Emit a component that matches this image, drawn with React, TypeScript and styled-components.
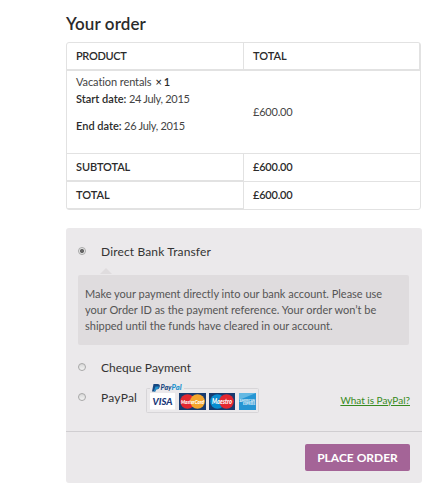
import React from "react";
import styled, { createGlobalStyle } from "styled-components";

const GlobalStyle = createGlobalStyle`
  * { box-sizing: border-box; }
  body { margin: 0; background: #fff; color: #444; font: 11px/16px Lato, sans-serif; }
  p { margin: 0; }
`;

const Page = styled.main`
  width: 438px;
  height: 489px;
  padding: 13px 16px 0 66px;
  overflow: hidden;
`;

const Title = styled.h3`
  margin: 0 0 7px;
  height: 22px;
  font-size: 17px;
  line-height: 22px;
  font-weight: 600;
  letter-spacing: 0.1px;
  color: #2b2b2b;
`;

const OrderTable = styled.section`
  width: 355px;
  border: 1px solid #e2e2e2;
  border-radius: 3px;
`;

const Row = styled.div<{ $height: number }>`
  display: grid;
  grid-template-columns: 177px 1fr;
  height: ${(p) => p.$height}px;
`;

const Cell = styled.div<{ $bottom?: number; $right?: number; $heading?: boolean; $tracking?: number }>`
  display: flex;
  flex-direction: column;
  justify-content: center;
  padding-left: 9px;
  border: 0 solid #e2e2e2;
  border-bottom-width: ${(p) => p.$bottom ?? 0}px;
  border-right-width: ${(p) => p.$right ?? 0}px;
  font-weight: ${(p) => (p.$heading ? 600 : 400)};
  letter-spacing: ${(p) => p.$tracking ?? 0}px;
  color: ${(p) => (p.$heading ? "#2b2b2b" : "#444")};
`;

const Price = styled.span<{ $lift?: number }>`
  letter-spacing: -0.2px;
  padding-bottom: ${(p) => p.$lift ?? 0}px;
`;

const Strong = styled.strong`
  font-weight: 600;
  letter-spacing: 0;
  color: #2b2b2b;
`;

const Quantity = styled(Strong)`
  margin-left: 4px;
  letter-spacing: -0.4px;
`;

const DateLine = styled.p<{ $gap?: number }>`
  line-height: 17px;
  margin-top: ${(p) => p.$gap ?? 0}px;
  letter-spacing: -0.3px;
`;

const ProductName = styled.p`
  line-height: 17px;
  letter-spacing: -0.09px;
`;

const ProductCell = styled(Cell)`
  justify-content: flex-start;
  padding-top: 2px;
`;

const Payment = styled.section`
  width: 356px;
  height: 255px;
  margin-top: 18px;
  border-radius: 3px;
  background: #ebe9eb;
`;

const Methods = styled.div`
  height: 204px;
  padding: 15px 12px 0;
  border-bottom: 1px solid #d0ced1;
`;

const Method = styled.label<{ $height: number; $tracking?: number }>`
  display: flex;
  align-items: center;
  height: ${(p) => p.$height}px;
  font-size: 12px;
  letter-spacing: ${(p) => p.$tracking ?? 0}px;
  color: #333;
`;

const Radio = styled.span<{ $checked?: boolean }>`
  width: 8px;
  height: 8px;
  flex: none;
  margin: 0 15px 2px 0;
  border: 1px solid #a8a8a8;
  border-radius: 50%;
  background: ${(p) =>
    p.$checked ? "radial-gradient(circle, #666 0 1.7px, #e8e8e8 2.4px)" : "linear-gradient(#d8d8d8, #f4f4f4)"};
`;

const Arrow = styled.div`
  width: 0;
  height: 6px;
  margin: 7px 0 0 22px;
  border: 6px solid transparent;
  border-top: 0;
  border-bottom-color: #dfdcde;
`;

const Description = styled.div`
  width: 331px;
  height: 70px;
  margin-top: 1px;
  padding: 11px 7px;
  border-radius: 2px;
  background: #dfdcde;
  color: #555;
  letter-spacing: -0.01px;
  white-space: nowrap;
`;

const Logos = styled.svg`
  display: block;
  margin-left: 8px;
  flex: none;
`;

const HelpLink = styled.a`
  margin-left: auto;
  padding-top: 3px;
  font-size: 10px;
  line-height: 12px;
  letter-spacing: 0;
  color: #368a20;
  text-decoration: underline;
`;

const Footer = styled.div`
  display: flex;
  justify-content: flex-end;
  padding: 12px 12px 0 0;
`;

const Button = styled.button`
  width: 105px;
  height: 27px;
  padding: 0;
  border: 0;
  border-radius: 2px;
  background: #a46497;
  color: #fff;
  font: 700 12px/27px Lato, sans-serif;
`;

const LogoText = styled.text<{ $size: number; $upright?: boolean }>`
  font-family: Lato, sans-serif;
  font-size: ${(p) => p.$size}px;
  font-weight: 900;
  font-style: ${(p) => (p.$upright ? "normal" : "italic")};
  letter-spacing: 0;
`;

const PayPalCards = () => (
  <Logos width="114" height="31" viewBox="0 0 114 31">
    <rect x="1.5" y="5.500" width="112" height="24" rx="1" fill="none" stroke="#d7d5d8" />
    <g transform="translate(1 0)">
      <path d="M4 4h34v4H4z" fill="#ebe9eb" />
      <path d="M7.500 1h4q3 .2 2.200 3T10 6.300L9.300 8.500H6z" fill="#164780" />
      <path d="M9.500 3.500h3.500q-.5 3-3.300 3L9.200 8.500H7.700z" fill="#2191ce" />
      <LogoText $size={7} x="14.500" y="7" fill="#164780" textLength="11" lengthAdjust="spacingAndGlyphs">Pay</LogoText>
      <LogoText $size={7} x="25.500" y="7" fill="#2191ce" textLength="10" lengthAdjust="spacingAndGlyphs">Pal</LogoText>
      <path d="M4 10h25v16.500H4z" fill="#fff" />
      <LogoText $size={9} x="6.500" y="21.500" fill="#193979" textLength="20" lengthAdjust="spacingAndGlyphs">VISA</LogoText>
      <path d="M33 10h27v17H33zM63 10h26v17H63z" fill="#173b70" />
      <circle cx="41.500" cy="18.500" r="7.300" fill="#e32730" />
      <circle cx="51.500" cy="18.500" r="7.300" fill="#f3a52c" />
      <LogoText $size={6} x="35" y="20.500" fill="#fff" textLength="23" lengthAdjust="spacingAndGlyphs">MasterCard</LogoText>
      <circle cx="71.500" cy="18.500" r="7.300" fill="#088bd0" />
      <circle cx="80.500" cy="18.500" r="7.300" fill="#e32730" />
      <LogoText $size={6.5} x="66" y="20.500" fill="#fff" textLength="20" lengthAdjust="spacingAndGlyphs">Maestro</LogoText>
      <path d="M93 10h17v17H93z" fill="#2695d3" />
      <path d="M93 10h17L93 17z" fill="#64b9e3" />
      <LogoText $size={4} $upright x="93.500" y="18.500" fill="#e1f3fb" textLength="15.500" lengthAdjust="spacingAndGlyphs">AMERICAN</LogoText>
      <LogoText $size={4} $upright x="97" y="22" fill="#e1f3fb" textLength="12" lengthAdjust="spacingAndGlyphs">EXPRESS</LogoText>
    </g>
  </Logos>
);

export default function App() {
  return (
    <>
      <GlobalStyle />
      <Page>
        <Title>Your order</Title>
        <OrderTable>
          <Row $height={28}>
            <Cell $heading $bottom={2} $right={1} $tracking={-0.35}>PRODUCT</Cell>
            <Cell $heading $bottom={2} $right={1}>TOTAL</Cell>
          </Row>
          <Row $height={83}>
            <ProductCell $bottom={1}>
              <ProductName>Vacation rentals<Quantity>× 1</Quantity></ProductName>
              <DateLine><Strong>Start date:</Strong> 24 July, 2015</DateLine>
              <DateLine $gap={10}><Strong>End date:</Strong> 26 July, 2015</DateLine>
            </ProductCell>
            <Cell $bottom={1}><Price>£600.00</Price></Cell>
          </Row>
          <Row $height={28}>
            <Cell $heading $bottom={2} $right={1} $tracking={-0.1}>SUBTOTAL</Cell>
            <Cell $heading $bottom={1}><Price $lift={1}>£600.00</Price></Cell>
          </Row>
          <Row $height={27}>
            <Cell $heading $bottom={1} $right={1}>TOTAL</Cell>
            <Cell $heading><Price $lift={1}>£600.00</Price></Cell>
          </Row>
        </OrderTable>
        <Payment>
          <Methods>
            <Method $height={18} $tracking={0.14}><Radio $checked />Direct Bank Transfer</Method>
            <Arrow />
            <Description>
              Make your payment directly into our bank account. Please use<br />
              your Order ID as the payment reference. Your order won’t be<br />
              shipped until the funds have cleared in our account.
            </Description>
            <Method $height={45}><Radio />Cheque Payment</Method>
            <Method $height={16} $tracking={0.25}>
              <Radio />PayPal<PayPalCards /><HelpLink>What is PayPal?</HelpLink>
            </Method>
          </Methods>
          <Footer><Button>PLACE ORDER</Button></Footer>
        </Payment>
      </Page>
    </>
  );
}
